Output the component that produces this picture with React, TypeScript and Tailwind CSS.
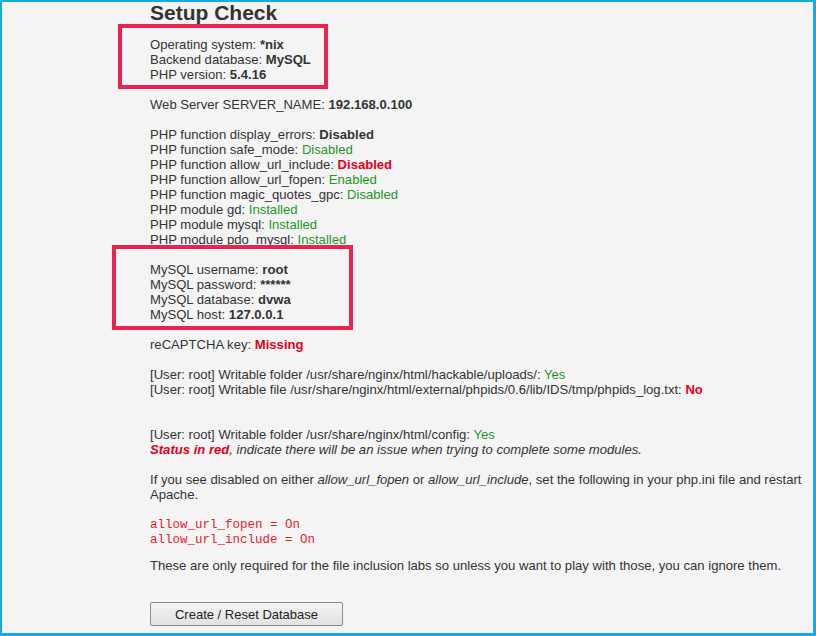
import React from "react";

const G = ({ children }: { children: React.ReactNode }) => (
  <span className="text-[#26962b]">{children}</span>
);
const R = ({ children }: { children: React.ReactNode }) => (
  <span className="font-bold text-[#e3001b]">{children}</span>
);
const B = ({ children }: { children: React.ReactNode }) => (
  <span className="font-bold">{children}</span>
);
const Blank = () => <div className="h-[15px]" />;

export default function App() {
  return (
    <div
      className="relative w-[816px] h-[636px] overflow-hidden bg-[#f4f4f4] border-solid border-[#17a8e8] border-t-2 border-l-2 border-r-[3px] border-b-[3px] text-[#333] text-[13.1px] leading-[15px]"
      style={{ fontFamily: '"Liberation Sans", Arial, sans-serif' }}
    >
      <div className="pl-[148px] pr-[8px]">
        <h1 className="text-[21px] leading-[21px] font-bold text-[#333]">Setup Check</h1>
        <div className="mt-[14px] whitespace-nowrap">
          <div>Operating system: <B>*nix</B></div>
          <div>Backend database: <B>MySQL</B></div>
          <div>PHP version: <B>5.4.16</B></div>
          <Blank />
          <div>Web Server SERVER_NAME: <B>192.168.0.100</B></div>
          <Blank />
          <div>PHP function display_errors: <B>Disabled</B></div>
          <div>PHP function safe_mode: <G>Disabled</G></div>
          <div>PHP function allow_url_include: <R>Disabled</R></div>
          <div>PHP function allow_url_fopen: <G>Enabled</G></div>
          <div>PHP function magic_quotes_gpc: <G>Disabled</G></div>
          <div>PHP module gd: <G>Installed</G></div>
          <div>PHP module mysql: <G>Installed</G></div>
          <div>PHP module pdo_mysql: <G>Installed</G></div>
          <Blank />
          <div>MySQL username: <B>root</B></div>
          <div>MySQL password: <B>******</B></div>
          <div>MySQL database: <B>dvwa</B></div>
          <div>MySQL host: <B>127.0.0.1</B></div>
          <Blank />
          <div>reCAPTCHA key: <R>Missing</R></div>
          <Blank />
          <div>[User: root] Writable folder /usr/share/nginx/html/hackable/uploads/: <G>Yes</G></div>
          <div>[User: root] Writable file /usr/share/nginx/html/external/phpids/0.6/lib/IDS/tmp/phpids_log.txt: <R>No</R></div>
          <Blank />
          <Blank />
          <div>[User: root] Writable folder /usr/share/nginx/html/config: <G>Yes</G></div>
          <div>
            <i><span className="font-bold text-[#e3001b]">Status in red</span>, indicate there will be an issue when trying to complete some modules.</i>
          </div>
          <Blank />
          <div>
            If you see disabled on either <i>allow_url_fopen</i> or <i>allow_url_include</i>, set the following in your php.ini file and restart
            <br />
            Apache.
          </div>
          <div
            className="mt-[16px] text-[12.5px] leading-[15px] text-[#e11d2a]"
            style={{ fontFamily: '"Liberation Mono", "Courier New", monospace' }}
          >
            <div>allow_url_fopen = On</div>
            <div>allow_url_include = On</div>
          </div>
          <div className="mt-[10px]">
            These are only required for the file inclusion labs so unless you want to play with those, you can ignore them.
          </div>
          <button
            className="mt-[29px] w-[193px] h-[24px] rounded-[2px] border border-[#8a8a8a] bg-gradient-to-b from-[#f3f3f3] to-[#e2e2e2] text-[13px] text-[#222]"
            style={{ fontFamily: '"Liberation Sans", Arial, sans-serif' }}
          >
            Create / Reset Database
          </button>
        </div>
      </div>

      <div className="absolute left-[116px] top-[22px] w-[210px] h-[65px] border-4 border-[#ea2350]" />
      <div className="absolute left-[110px] top-[243px] w-[241px] h-[85px] border-4 border-[#ea2350]" />
    </div>
  );
}
